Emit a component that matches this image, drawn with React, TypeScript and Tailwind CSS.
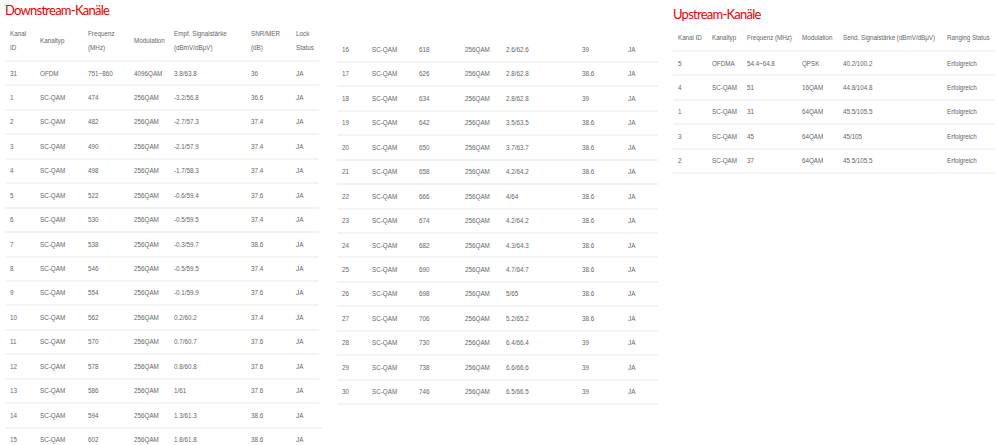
const fontStack = { fontFamily: '"Liberation Sans", Arial, sans-serif' }
const headingFont = { fontFamily: 'Lato, "Liberation Sans", sans-serif' }

type Column = { width: string; label: string[] }

const downColumns: Column[] = [
  { width: 'w-[30px]', label: ['Kanal', 'ID'] },
  { width: 'w-[48px]', label: ['Kanaltyp'] },
  { width: 'w-[46px]', label: ['Frequenz', '(MHz)'] },
  { width: 'w-[40px]', label: ['Modulation'] },
  { width: 'w-[77px]', label: ['Empf. Signalstärke', '(dBmV/dBμV)'] },
  { width: 'w-[45px]', label: ['SNR/MER', '(dB)'] },
  { width: 'w-[28px]', label: ['Lock', 'Status'] },
]

const midWidths = ['w-[30px]', 'w-[47px]', 'w-[46px]', 'w-[41px]', 'w-[76px]', 'w-[46px]', 'w-[35px]']

const upColumns: Column[] = [
  { width: 'w-[34px]', label: ['Kanal ID'] },
  { width: 'w-[35px]', label: ['Kanaltyp'] },
  { width: 'w-[55px]', label: ['Frequenz (MHz)'] },
  { width: 'w-[41px]', label: ['Modulation'] },
  { width: 'w-[104px]', label: ['Send. Signalstärke (dBmV/dBμV)'] },
  { width: 'w-[53px]', label: ['Ranging Status'] },
]

const leftRows = [
  ['31', 'OFDM', '751~860', '4096QAM', '3.8/63.8', '36', 'JA'],
  ['1', 'SC-QAM', '474', '256QAM', '-3.2/56.8', '36.6', 'JA'],
  ['2', 'SC-QAM', '482', '256QAM', '-2.7/57.3', '37.4', 'JA'],
  ['3', 'SC-QAM', '490', '256QAM', '-2.1/57.9', '37.4', 'JA'],
  ['4', 'SC-QAM', '498', '256QAM', '-1.7/58.3', '37.4', 'JA'],
  ['5', 'SC-QAM', '522', '256QAM', '-0.6/59.4', '37.6', 'JA'],
  ['6', 'SC-QAM', '530', '256QAM', '-0.5/59.5', '37.4', 'JA'],
  ['7', 'SC-QAM', '538', '256QAM', '-0.3/59.7', '38.6', 'JA'],
  ['8', 'SC-QAM', '546', '256QAM', '-0.5/59.5', '37.4', 'JA'],
  ['9', 'SC-QAM', '554', '256QAM', '-0.1/59.9', '37.6', 'JA'],
  ['10', 'SC-QAM', '562', '256QAM', '0.2/60.2', '37.4', 'JA'],
  ['11', 'SC-QAM', '570', '256QAM', '0.7/60.7', '37.6', 'JA'],
  ['12', 'SC-QAM', '578', '256QAM', '0.8/60.8', '37.6', 'JA'],
  ['13', 'SC-QAM', '586', '256QAM', '1/61', '37.6', 'JA'],
  ['14', 'SC-QAM', '594', '256QAM', '1.3/61.3', '38.6', 'JA'],
  ['15', 'SC-QAM', '602', '256QAM', '1.8/61.8', '38.6', 'JA'],
]

const midRows = [
  ['16', 'SC-QAM', '618', '256QAM', '2.6/62.6', '39', 'JA'],
  ['17', 'SC-QAM', '626', '256QAM', '2.8/62.8', '38.6', 'JA'],
  ['18', 'SC-QAM', '634', '256QAM', '2.8/62.8', '39', 'JA'],
  ['19', 'SC-QAM', '642', '256QAM', '3.5/63.5', '38.6', 'JA'],
  ['20', 'SC-QAM', '650', '256QAM', '3.7/63.7', '38.6', 'JA'],
  ['21', 'SC-QAM', '658', '256QAM', '4.2/64.2', '38.6', 'JA'],
  ['22', 'SC-QAM', '666', '256QAM', '4/64', '38.6', 'JA'],
  ['23', 'SC-QAM', '674', '256QAM', '4.2/64.2', '38.6', 'JA'],
  ['24', 'SC-QAM', '682', '256QAM', '4.3/64.3', '38.6', 'JA'],
  ['25', 'SC-QAM', '690', '256QAM', '4.7/64.7', '38.6', 'JA'],
  ['26', 'SC-QAM', '698', '256QAM', '5/65', '38.6', 'JA'],
  ['27', 'SC-QAM', '706', '256QAM', '5.2/65.2', '38.6', 'JA'],
  ['28', 'SC-QAM', '730', '256QAM', '6.4/66.4', '39', 'JA'],
  ['29', 'SC-QAM', '738', '256QAM', '6.6/66.6', '39', 'JA'],
  ['30', 'SC-QAM', '746', '256QAM', '6.5/66.5', '39', 'JA'],
]

const upRows = [
  ['5', 'OFDMA', '54.4~64.8', 'QPSK', '40.2/100.2', 'Erfolgreich'],
  ['4', 'SC-QAM', '51', '16QAM', '44.8/104.8', 'Erfolgreich'],
  ['1', 'SC-QAM', '31', '64QAM', '45.5/105.5', 'Erfolgreich'],
  ['3', 'SC-QAM', '45', '64QAM', '45/105', 'Erfolgreich'],
  ['2', 'SC-QAM', '37', '64QAM', '45.5/105.5', 'Erfolgreich'],
]

const ChannelTable = ({
  widths,
  head,
  rows,
  headHeight,
  tableClass,
  longLineRow,
}: {
  widths: string[]
  head?: string[][]
  rows: string[][]
  headHeight?: string
  tableClass: string
  longLineRow?: string
}) => (
  <table className={`${tableClass} table-fixed border-collapse text-[6.3px] text-[#666666]`}>
    <colgroup>
      {widths.map((w, i) => (
        <col key={i} className={w} />
      ))}
      {longLineRow && <col className="w-[3px]" />}
    </colgroup>
    {head && (
      <thead>
        <tr className={headHeight}>
          {head.map((lines, i) => (
            <th key={i} className="border-b-2 border-[#f3f3f3] pl-[5px] text-left font-normal leading-[14px] whitespace-nowrap">
              {lines.map((line) => (
                <div key={line}>{line}</div>
              ))}
            </th>
          ))}
          {longLineRow && <th />}
        </tr>
      </thead>
    )}
    <tbody>
      {rows.map((row) => (
        <tr key={row[0]} className="h-[24.45px]">
          {row.map((cell, i) => (
            <td key={i} className="border-b-2 border-[#f3f3f3] pl-[5px] whitespace-nowrap">
              {cell}
            </td>
          ))}
          {longLineRow && <td className={longLineRow === row[0] ? 'border-b-2 border-[#f3f3f3]' : ''} />}
        </tr>
      ))}
    </tbody>
  </table>
)

export default function App() {
  return (
    <div className="flex h-[445px] w-[998px] overflow-hidden bg-white" style={fontStack}>
      <section className="ml-[5px] w-[332px] shrink-0">
        <h2 className="h-[21px] text-[13px] font-normal leading-[20px] tracking-[-0.75px] text-[#f00000]" style={headingFont}>
          Downstream-Kanäle
        </h2>
        <ChannelTable
          widths={downColumns.map((c) => c.width)}
          head={downColumns.map((c) => c.label)}
          rows={leftRows}
          headHeight="h-[40px]"
          tableClass="w-[317px]"
          longLineRow="14"
        />
      </section>
      <section className="w-[336px] shrink-0 pt-[37.5px]">
        <ChannelTable widths={midWidths} rows={midRows} tableClass="w-[321px]" />
      </section>
      <section className="w-[322px] shrink-0">
        <h2 className="h-[26px] pt-[4px] text-[13px] font-normal leading-[20px] tracking-[-0.75px] text-[#f00000]" style={headingFont}>
          Upstream-Kanäle
        </h2>
        <ChannelTable
          widths={upColumns.map((c) => c.width)}
          head={upColumns.map((c) => c.label)}
          rows={upRows}
          headHeight="h-[25px]"
          tableClass="w-[322px] tracking-[-0.04px]"
        />
      </section>
    </div>
  )
}
